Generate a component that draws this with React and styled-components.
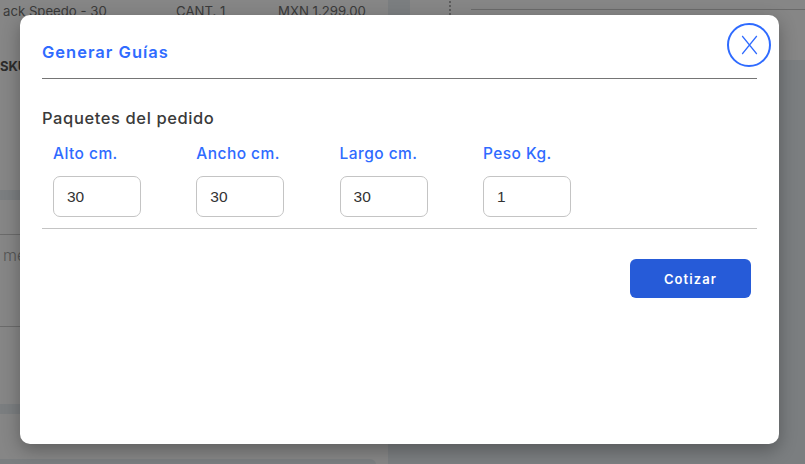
import React from 'react'
import styled, { createGlobalStyle } from 'styled-components'

const GlobalStyle = createGlobalStyle`
  html, body {
    margin: 0;
    padding: 0;
    width: 805px;
    height: 464px;
    overflow: hidden;
    font-family: "Inter", "Liberation Sans", sans-serif;
  }
  * { box-sizing: border-box; }
`

const Page = styled.div`
  position: relative;
  width: 805px;
  height: 464px;
  overflow: hidden;
  background: #7b7e80;
  display: grid;
  grid-template-columns: 388px 1fr;
  align-items: start;
  column-gap: 22px;
`

const LeftColumn = styled.div`
  display: flex;
  flex-direction: column;
  gap: 10px;
`

const Card = styled.div`
  background: #868686;
  height: ${p => p.$height}px;
  flex: none;
`

const OrderRow = styled.div`
  display: grid;
  grid-template-columns: 173px 102px 1fr;
  padding: 2px 0 0 3px;
  font-size: 13.2px;
  line-height: 18px;
  color: #3a3a3a;
  white-space: nowrap;
`

const Sku = styled.div`
  margin: 38px 0 0;
  font-size: 13px;
  line-height: 16px;
  font-weight: 700;
  color: #2c2c2c;
`

const CardRule = styled.div`
  height: 1px;
  background: #6b6b6b;
`

const NotesCard = styled(Card)`
  padding-top: 34px;
`

const Notes = styled.div`
  height: 91px;
  padding: 10px 0 0 3px;
  font-size: 16px;
  line-height: 20px;
  font-weight: 300;
  color: #555;
`

const BottomCard = styled(Card)`
  padding-top: 45px;
`

const BottomTab = styled.div`
  width: 376px;
  height: 6px;
  background: #7b7e80;
  border-top-right-radius: 6px;
`

const RightPanel = styled.div`
  display: flex;
  align-items: flex-start;
  gap: 20px;
  height: 60px;
  padding: 1px 0 0 39px;
  background: #868686;
`

const Dots = styled.div`
  width: 2px;
  height: 14px;
  background: repeating-linear-gradient(#5c5c5c 0 2px, transparent 2px 4px);
`

const PanelRule = styled.div`
  flex: 1;
  height: 1px;
  margin-top: 8px;
  background: #6a6a6a;
`

const Modal = styled.div`
  position: absolute;
  left: 20px;
  top: 15px;
  width: 759px;
  height: 429px;
  background: #fff;
  border-radius: 10px;
  box-shadow: 0 6px 18px rgba(0, 0, 0, 0.3);
  padding: 0 22px;
  display: flex;
  flex-direction: column;
`

const ModalHeader = styled.div`
  height: 64px;
  padding-top: 11px;
  border-bottom: 1px solid #757575;
  display: flex;
  align-items: center;
  flex: none;
`

const Title = styled.h2`
  margin: 0;
  font-size: 16.5px;
  font-weight: 600;
  letter-spacing: 1px;
  color: #2f6bff;
`

const CloseButton = styled.button`
  position: absolute;
  top: 8px;
  right: 8px;
  width: 44px;
  height: 44px;
  padding: 0;
  border: 2px solid #2f6bff;
  border-radius: 50%;
  background: #fff;
  display: flex;
  align-items: center;
  justify-content: center;
`

const SectionTitle = styled.h3`
  margin: 29px 0 0;
  font-size: 16.5px;
  line-height: 20px;
  font-weight: 500;
  letter-spacing: 0.6px;
  color: #3a3a3a;
`

const Fields = styled.div`
  display: flex;
  gap: 55.3px;
  padding: 17px 0 11px 11px;
  border-bottom: 1px solid #c4c4c4;
`

const Field = styled.label`
  display: flex;
  flex-direction: column;
  gap: 13px;
  width: 88px;
`

const FieldLabel = styled.span`
  font-size: 15.5px;
  line-height: 18px;
  font-weight: 500;
  letter-spacing: 0.45px;
  color: #2f6bff;
  white-space: nowrap;
`

const Input = styled.input`
  width: 88px;
  height: 41px;
  border: 1px solid #c4c4c4;
  border-radius: 7px;
  padding: 0 13px;
  font-family: "Liberation Sans", Arial, sans-serif;
  font-size: 15.5px;
  color: #333;
  background: #fff;
  outline: none;
`

const Actions = styled.div`
  display: flex;
  justify-content: flex-end;
  padding: 30px 6px 0 0;
`

const PrimaryButton = styled.button`
  width: 121px;
  height: 39px;
  border: none;
  border-radius: 6px;
  background: #265bd8;
  color: #fff;
  font-family: inherit;
  font-size: 13px;
  font-weight: 600;
  letter-spacing: 1.1px;
`

const fields = [
  { label: 'Alto cm.', value: '30' },
  { label: 'Ancho cm.', value: '30' },
  { label: 'Largo cm.', value: '30' },
  { label: 'Peso Kg.', value: '1' },
]

const App = () => (
  <Page>
    <GlobalStyle />
    <LeftColumn>
      <Card $height={190}>
        <OrderRow>
          <span>ack Speedo - 30</span>
          <span>CANT. 1</span>
          <span>MXN 1,299.00</span>
        </OrderRow>
        <Sku>SKU</Sku>
      </Card>
      <NotesCard $height={204}>
        <CardRule />
        <Notes>me</Notes>
        <CardRule />
      </NotesCard>
      <BottomCard $height={51}>
        <BottomTab />
      </BottomCard>
    </LeftColumn>
    <RightPanel>
      <Dots />
      <PanelRule />
    </RightPanel>
    <Modal>
      <ModalHeader>
        <Title>Generar Guías</Title>
      </ModalHeader>
      <CloseButton aria-label="Cerrar">
        <svg width="17" height="20" viewBox="0 0 17 20" fill="none" stroke="#2f6bff" strokeWidth="1.2">
          <path d="M1.2 1 15.8 19M15.8 1 1.2 19" />
        </svg>
      </CloseButton>
      <SectionTitle>Paquetes del pedido</SectionTitle>
      <Fields>
        {fields.map(f => (
          <Field key={f.label}>
            <FieldLabel>{f.label}</FieldLabel>
            <Input defaultValue={f.value} />
          </Field>
        ))}
      </Fields>
      <Actions>
        <PrimaryButton>Cotizar</PrimaryButton>
      </Actions>
    </Modal>
  </Page>
)

export default App
